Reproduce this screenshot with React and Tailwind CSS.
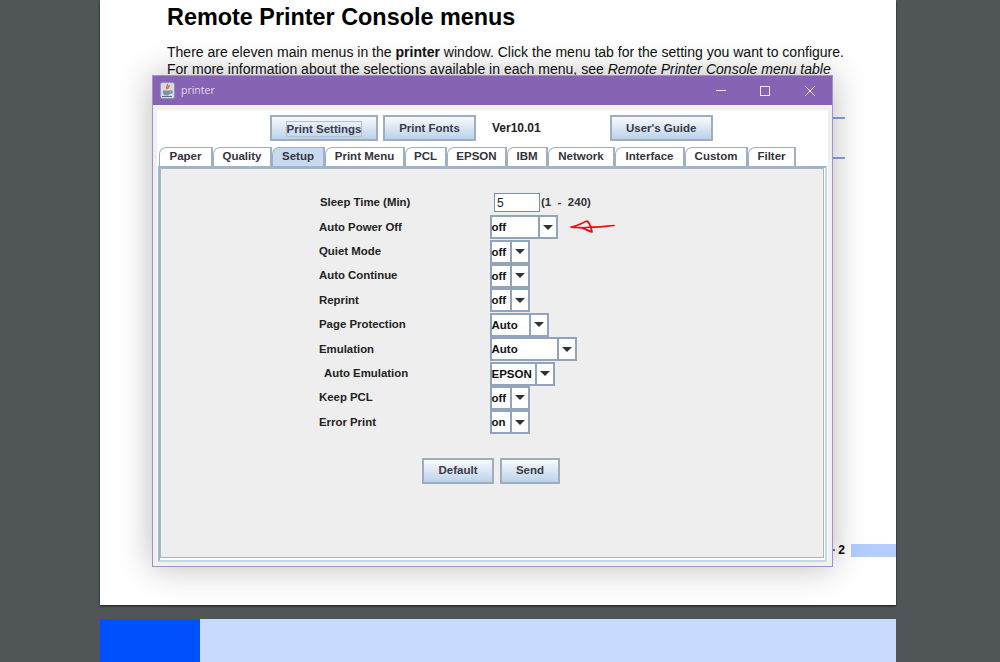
const tabs = [
  { name: "Paper", w: "w-[54px]" },
  { name: "Quality", w: "w-[59px]" },
  { name: "Setup", w: "w-[53px]", active: true },
  { name: "Print Menu", w: "w-[80px]" },
  { name: "PCL", w: "w-[42px]" },
  { name: "EPSON", w: "w-[60px]" },
  { name: "IBM", w: "w-[41px]" },
  { name: "Network", w: "w-[67px]" },
  { name: "Interface", w: "w-[70px]" },
  { name: "Custom", w: "w-[63px]" },
  { name: "Filter", w: "w-[48px]" },
];

const rows = [
  { label: "Auto Power Off", value: "off", w: "w-[46px]" },
  { label: "Quiet Mode", value: "off", w: "w-[18px]" },
  { label: "Auto Continue", value: "off", w: "w-[18px]" },
  { label: "Reprint", value: "off", w: "w-[18px]" },
  { label: "Page Protection", value: "Auto", w: "w-[37px]" },
  { label: "Emulation", value: "Auto", w: "w-[65px]" },
  { label: "Auto Emulation", value: "EPSON", w: "w-[43px]", indent: true },
  { label: "Keep PCL", value: "off", w: "w-[18px]" },
  { label: "Error Print", value: "on", w: "w-[18px]" },
];

function JavaButton({ children, className, focused }) {
  return (
    <button className={`flex h-[26px] items-center justify-center border-2 border-[#9eadc0] bg-gradient-to-b from-[#f8fafd] to-[#bcd2ea] pt-[1px] text-[11.5px] font-bold text-[#3a3a48] ${className}`}>
      <span className={focused ? "border border-[#b4c0ce] leading-[14px]" : ""}>{children}</span>
    </button>
  );
}

function Combo({ value, w }) {
  return (
    <div className="flex h-[24px] border-2 border-[#92a4bb] bg-white">
      <div className={`${w} box-content border-r-2 border-[#92a4bb] text-[11.5px] font-bold leading-[20px] text-[#111]`}>{value}</div>
      <div className="flex w-[16px] items-center justify-center">
        <div className="h-0 w-0 border-x-[5px] border-t-[5px] border-x-transparent border-t-[#333]" />
      </div>
    </div>
  );
}

function JavaIcon() {
  return (
    <svg width="15" height="17" viewBox="0 0 15 17" className="mr-[6px]">
      <rect x="0.5" y="0.5" width="14" height="16" rx="2" fill="#dcd8e2" stroke="#8a9ab5" />
      <path d="M7 2c2 2-2 3 0 5M9 3c1 2-2 2-1 4" fill="none" stroke="#e0662b" strokeWidth="1.3" />
      <path d="M3 8.5h7v2c0 2-1 3-3.5 3S3 12.500 3 10.500z" fill="#7f8fa8" />
      <path d="M10 9h2v2h-2M2 14.500h10" fill="none" stroke="#56708c" strokeWidth="1" />
    </svg>
  );
}

function RedArrow() {
  return (
    <svg width="46" height="16" viewBox="0 0 46 16" className="ml-[12px]">
      <path d="M1 8 C7 7 12 4 17 2 C20 4 21 8 22 13 C18 12 14 9 10 8.500 C6 8.500 3 8.500 1 8 C8 9 16 9 22 8 C30 8.500 37 7 44 6.500" fill="none" stroke="#f20d0d" strokeWidth="1.7" strokeLinejoin="round" strokeLinecap="round" />
    </svg>
  );
}

export default function App() {
  return (
    <div className="h-[662px] overflow-hidden bg-[#505557] font-['Liberation_Sans',Arial,sans-serif]">
      <div className="relative mx-[100px] flex h-[605px] w-[796px] flex-col bg-white pl-[67px] pt-[3px] shadow-[0_1px_2px_rgba(0,0,0,0.7)]">
        <h1 className="text-[23.4px] font-bold leading-[28px] text-black">Remote Printer Console menus</h1>
        <p className="mt-[13px] whitespace-nowrap text-[14.04px] leading-[16.5px] text-[#111]">
          There are eleven main menus in the <b>printer</b> window. Click the menu tab for the setting you want to configure.
          <br />
          For more information about the selections available in each menu, see <i>Remote Printer Console menu table</i>
        </p>

        <div className="absolute left-[733px] top-[117px] h-[2px] w-[12px] bg-[#86a4ea]" />
        <div className="absolute left-[733px] top-[157px] h-[2px] w-[12px] bg-[#86a4ea]" />

        <div className="mb-[47px] mt-auto flex items-center justify-end">
          <div className="h-[2px] w-[2px] bg-[#5b78c8]" />
          <span className="ml-[3px] text-xs font-bold text-black">2</span>
          <div className="ml-[6px] h-[13px] w-[45px] bg-[#b4cdfe]" />
        </div>

        {/* printer window */}
        <div className="absolute left-[52px] top-[75px] flex h-[492px] w-[681px] flex-col border border-[#a68fcb] bg-[#f0f0f0] shadow-[0_0_32px_rgba(0,0,0,0.28)]">
          <div className="flex h-[29px] shrink-0 items-center bg-[#8763b5] pl-[7px] text-[10.5px] text-[#e0d8ee]">
            <JavaIcon />
            <span className="font-['Open_Sans',sans-serif]">printer</span>
            <div className="ml-auto flex items-center text-[#efeaf7]">
              <div className="h-[1px] w-[10px] bg-current" />
              <div className="ml-[34px] h-[10px] w-[10px] border border-current" />
              <svg width="12" height="12" viewBox="0 0 12 12" className="ml-[34px] mr-[16px]">
                <path d="M1 1l10 10M11 1L1 11" stroke="currentColor" strokeWidth="1" />
              </svg>
            </div>
          </div>

          <div className="mx-[4px] mb-[4px] mt-[5px] flex flex-1 flex-col bg-white">
            <div className="flex h-[37px] shrink-0 items-start pl-[113px] pt-[5px]">
              <JavaButton className="w-[108px]" focused>Print Settings</JavaButton>
              <JavaButton className="ml-[5px] w-[93px]">Print Fonts</JavaButton>
              <span className="ml-[16px] text-xs font-bold leading-[26px] text-[#222]">Ver10.01</span>
              <JavaButton className="ml-[69px] w-[103px]">User's Guide</JavaButton>
            </div>

            <div className="flex h-[19px] shrink-0 items-end pl-[2px]">
              {tabs.map((t) => (
                <div
                  key={t.name}
                  className={`flex h-[19px] items-center justify-center rounded-tl-[7px] border border-b-0 border-r-2 border-[#a0b0c4] text-[11.5px] font-bold text-[#33333d] ${t.w} ${t.active ? "bg-[#c8daef]" : "bg-white"}`}
                >
                  {t.name}
                </div>
              ))}
            </div>

            <div className="mx-[1px] flex flex-1 flex-col border-2 border-[#c3d7ec] border-l-[#9db4d6] border-t-[#9db4d6] bg-white pb-[2px] pr-[1px]">
              <div className="flex flex-1 flex-col border border-[#a8b6c0] bg-[#eeeeee] pl-[158px] pt-[21px]">
                <div className="flex h-[25px] items-center">
                  <span className="ml-[1px] w-[174px] text-[11.4px] font-bold text-[#222]">Sleep Time (Min)</span>
                  <div className="h-[19px] w-[46px] border border-[#7f8fa3] bg-white pl-[2px] text-xs leading-[18px] text-[#222]">5</div>
                  <span className="ml-[1px] whitespace-pre text-[11.5px] font-bold text-[#333]">(1  -  240)</span>
                </div>
                <div className="flex flex-col">
                  {rows.map((r) => (
                    <div key={r.label} className="flex h-[24.4px] items-center">
                      <span className={`w-[170.5px] shrink-0 text-[11.4px] font-bold text-[#222] ${r.indent ? "pl-[5px]" : ""}`}>{r.label}</span>
                      <Combo value={r.value} w={r.w} />
                      {r.label === "Auto Power Off" && <RedArrow />}
                    </div>
                  ))}
                </div>
                <div className="ml-[103px] mt-[23px] flex gap-[6px]">
                  <JavaButton className="w-[72px]">Default</JavaButton>
                  <JavaButton className="w-[60px]">Send</JavaButton>
                </div>
              </div>
            </div>
          </div>
        </div>
      </div>

      <div className="mx-[100px] mt-[14px] flex h-[60px] w-[796px] bg-[#c9daff]">
        <div className="w-[100px] bg-[#0050ff]" />
      </div>
    </div>
  );
}
